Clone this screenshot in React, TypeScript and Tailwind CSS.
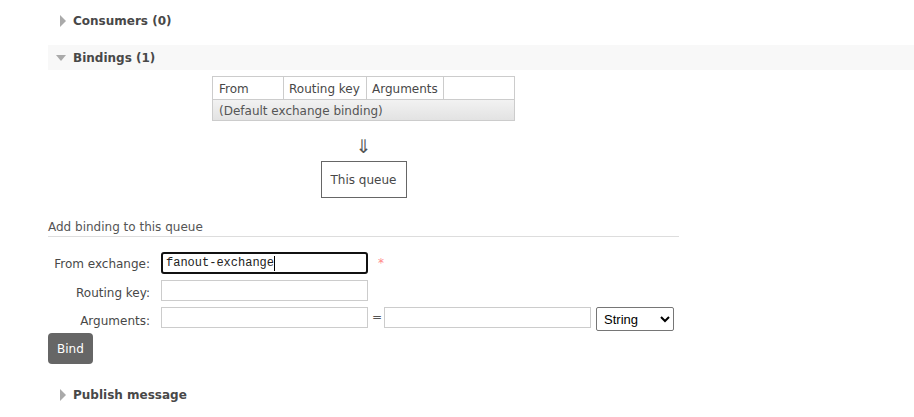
import React from 'react'

const Arrow = ({ open }: { open?: boolean }) =>
  open ? (
    <span className="inline-block w-0 h-0 border-l-[5px] border-r-[5px] border-t-[6px] border-l-transparent border-r-transparent border-t-[#aaa]" />
  ) : (
    <span className="inline-block w-0 h-0 border-t-[6px] border-b-[6px] border-l-[6px] border-t-transparent border-b-transparent border-l-[#aaa]" />
  )

function SectionHeader({ title, open, band }: { title: string; open?: boolean; band?: boolean }) {
  return (
    <div className={`h-[25px] flex items-center ${band ? 'bg-[#f8f8f8]' : ''}`}>
      <div className={`w-[25px] flex ${open ? 'justify-center' : 'justify-center pl-[4px]'}`}>
        <Arrow open={open} />
      </div>
      <span className="font-bold text-[#484848] text-[12px]">{title}</span>
    </div>
  )
}

export default function App() {
  return (
    <div className="w-[914px] h-[417px] bg-white pl-[48px] text-[12px] text-[#484848] overflow-hidden font-['DejaVu_Sans',Verdana,sans-serif]">
      <div className="pt-[8px]">
        <SectionHeader title="Consumers (0)" />
      </div>

      <div className="mt-[12px]">
        <SectionHeader title="Bindings (1)" open band />

        <div className="ml-[164px] mt-[6px] w-[303px] flex flex-col items-center">
          <table className="w-full border-collapse border border-[#ccc]">
            <thead>
              <tr className="h-[23px]">
                <th className="w-[71px] border border-[#ccc] text-left font-normal px-[6px] pt-[1px]">From</th>
                <th className="w-[83px] border border-[#ccc] text-left font-normal px-[5px] pt-[1px]">Routing key</th>
                <th className="w-[77px] border border-[#ccc] text-left font-normal px-[5px] pt-[1px]">Arguments</th>
                <th className="border border-[#ccc]"></th>
              </tr>
            </thead>
            <tbody>
              <tr className="h-[21px] bg-gradient-to-b from-[#f2f2f2] to-[#e2e2e2]">
                <td colSpan={4} className="px-[6px] pt-[1px] text-[#555]">(Default exchange binding)</td>
              </tr>
            </tbody>
          </table>

          <div className="mt-[15px] text-[19px] leading-[20px] text-[#555]">⇓</div>
          <div className="mt-[5px] w-[86px] h-[37px] border border-[#666] flex items-center justify-center text-[#484848]">
            This queue
          </div>
        </div>
      </div>

      <div className="mt-[20px] w-[631px]">
        <div className="border-b border-[#ddd] text-[#555]">Add binding to this queue</div>

        <div className="mt-[15px] flex items-start h-[21px]">
          <label className="w-[102px] shrink-0 text-right leading-[18px] pt-[3px]">From exchange:</label>
          <div className="ml-[11px] shrink-0 w-[207px] h-[22px] border-2 border-[#111] rounded-[3px] px-[3px] flex items-center font-['Liberation_Mono',monospace] text-[12px] text-[#222]">
            fanout-exchange
            <span className="w-px h-[15px] bg-black" />
          </div>
          <span className="ml-[10px] mt-[2px] text-[#f88] text-[12px]">*</span>
        </div>

        <div className="mt-[7px] flex items-start h-[21px]">
          <label className="w-[102px] shrink-0 text-right leading-[18px] pt-[4px]">Routing key:</label>
          <input className="ml-[11px] shrink-0 w-[207px] h-[21px] border border-[#ccc] outline-none" />
        </div>

        <div className="mt-[6px] flex items-start h-[21px]">
          <label className="w-[102px] shrink-0 text-right leading-[18px] pt-[5px]">Arguments:</label>
          <input className="ml-[11px] shrink-0 w-[207px] h-[21px] border border-[#ccc] outline-none" />
          <span className="ml-[4px] shrink-0 leading-[21px] text-[#555]">=</span>
          <input className="ml-[2px] shrink-0 w-[207px] h-[21px] border border-[#ccc] outline-none" />
          <select className="ml-[5px] shrink-0 w-[78px] h-[24px] border border-[#767676] rounded-[2px] px-[3px] text-[13px] text-black font-['Liberation_Sans',Arial,sans-serif] bg-white appearance-auto">
            <option>String</option>
            <option>Number</option>
            <option>Boolean</option>
            <option>List</option>
          </select>
        </div>

        <button className="mt-[5px] h-[31px] px-[9px] rounded-[4px] bg-[#666] text-white text-[12px]">Bind</button>
      </div>

      <div className="mt-[18px]">
        <SectionHeader title="Publish message" />
      </div>
    </div>
  )
}
